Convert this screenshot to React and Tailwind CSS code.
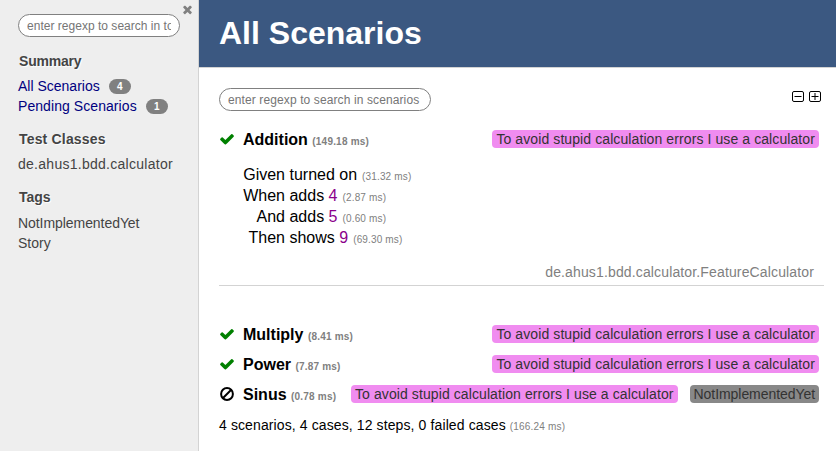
const STORY = 'To avoid stupid calculation errors I use a calculator';

function CheckIcon() {
  return (
    <svg viewBox="0 0 1792 1792" className="h-4 w-4 shrink-0" fill="#008000">
      <path d="M1671 566q0 40-28 68l-724 724-136 136q-28 28-68 28t-68-28l-136-136-362-362q-28-28-28-68t28-68l136-136q28-28 68-28t68 28l294 295 656-657q28-28 68-28t68 28l136 136q28 28 28 68z" />
    </svg>
  );
}

function BanIcon() {
  return (
    <svg viewBox="0 0 16 16" className="h-4 w-4 shrink-0" fill="none" stroke="#000" strokeWidth="2">
      <circle cx="8" cy="8" r="5.9" />
      <path d="M4 12L12 4" />
    </svg>
  );
}

function CloseIcon() {
  return (
    <svg viewBox="0 0 1792 1792" className="h-[13px] w-[13px]" fill="#808080">
      <path d="M1490 1322q0 40-28 68l-136 136q-28 28-68 28t-68-28l-294-294-294 294q-28 28-68 28t-68-28l-136-136q-28-28-28-68t28-68l294-294-294-294q-28-28-28-68t28-68l136-136q28-28 68-28t68 28l294 294 294-294q28-28 68-28t68 28l136 136q28 28 28 68t-28 68l-294 294 294 294q28 28 28 68z" />
    </svg>
  );
}

function BoxIcon({ plus }) {
  return (
    <svg viewBox="0 0 12 11" className="h-[11px] w-3" fill="none" stroke="#000" strokeWidth="1">
      <rect x="0.5" y="0.5" width="11" height="10" rx="1.5" />
      <path d="M2.5 5.5H9.5" />
      {plus && <path d="M6 2V9" />}
    </svg>
  );
}

function Search({ text, className, inputClass = 'tracking-[0.11px]' }) {
  return (
    <div className={`h-[23px] rounded-full border border-[#808080] bg-white px-2 ${className}`}>
      <input
        placeholder={text}
        className={`block h-[21px] w-full bg-transparent p-0 text-[12px] outline-none placeholder:text-[#757575] ${inputClass}`}
      />
    </div>
  );
}

function Count({ children }) {
  return (
    <span className="flex h-[15px] w-[22px] items-center justify-center rounded-full bg-[#808080] pt-px text-[10px] font-bold tracking-normal text-white">
      {children}
    </span>
  );
}

function Heading({ className = '', children }) {
  return (
    <h3 className={`h-5 pl-px text-[14px] leading-5 font-bold text-[#444] [text-shadow:1px_1px_1px_#fff] ${className}`}>
      {children}
    </h3>
  );
}

function Tag({ gray, children }) {
  return (
    <span
      className={`h-[18px] rounded pr-1 pl-1 text-[14px] leading-[18px] whitespace-nowrap text-[#333] ${
        gray ? 'bg-[#888888] tracking-[-0.06px]' : 'bg-[#f08cf0] tracking-[0.094px]'
      }`}
    >
      {children}
    </span>
  );
}

function Scenario({ icon, name, time, tags }) {
  return (
    <div className="flex h-[30px] items-center pr-[17px]">
      {icon}
      <h4 className="ml-2 pt-[3px] text-[16px] leading-5 font-bold whitespace-nowrap">
        {name} <span className="text-[10px] tracking-[0.2px] text-[#808080]">({time} ms)</span>
      </h4>
      <div className="ml-auto flex gap-3">{tags}</div>
    </div>
  );
}

function Step({ word, rest, value, time }) {
  return (
    <div className="flex h-[21px] items-baseline leading-[21px] whitespace-pre">
      <span className="w-[47px] text-right">{word}</span>
      <span> {rest}</span>
      {value && <span className="text-[#8b008b]"> {value}</span>}
      <span className="ml-[5px] text-[10px] tracking-[0.15px] text-[#808080]">({time} ms)</span>
    </div>
  );
}

export default function App() {
  return (
    <div className="flex h-[451px] w-[836px] overflow-hidden bg-white font-['Liberation_Sans',Arial,sans-serif] text-black">
      <aside className="relative h-full w-[199px] shrink-0 border-r border-[#d3d3d3] bg-[#eee] pt-[14px] pl-[18px] text-[14px] leading-5">
        <button className="absolute top-[3px] right-1" aria-label="Close">
          <CloseIcon />
        </button>
        <Search text="enter regexp to search in toc" className="w-[162px]" inputClass="tracking-[0.02px]" />
        <div className="pt-[14px]">
          <Heading className="tracking-[-0.2px]">Summary</Heading>
          <ul className="mt-[5px] text-[#000080]">
            <li className="flex h-5 items-center gap-[9px]">All Scenarios <Count>4</Count></li>
            <li className="flex h-5 items-center gap-[9px] tracking-[0.07px]">Pending Scenarios <Count>1</Count></li>
          </ul>
        </div>
        <div className="pt-[13px]">
          <Heading className="tracking-[0.18px]">Test Classes</Heading>
          <p className="mt-[5px] tracking-[0.27px] text-[#444]">de.ahus1.bdd.calculator</p>
        </div>
        <div className="pt-[13px]">
          <Heading>Tags</Heading>
          <ul className="mt-[6px] text-[#444]">
            <li className="tracking-[-0.06px]">NotImplementedYet</li>
            <li>Story</li>
          </ul>
        </div>
      </aside>
      <main className="flex-1">
        <header className="h-[68px] border-b border-[#d3d3d3] bg-[#3b5881] pl-5">
          <h1 className="pt-[13px] text-[32px] leading-10 font-bold text-white">All Scenarios</h1>
        </header>
        <div className="pl-5">
          <div className="flex items-start pt-5 pr-[15px]">
            <Search text="enter regexp to search in scenarios" className="w-[212px]" />
            <div className="mt-[3px] ml-auto flex gap-[5px]">
              <BoxIcon />
              <BoxIcon plus />
            </div>
          </div>
          <div className="mt-[13px]">
            <Scenario icon={<CheckIcon />} name="Addition" time="149.18" tags={<Tag>{STORY}</Tag>} />
          </div>
          <div className="mt-[10px] pl-[19px] text-[16px]">
            <Step word="Given" rest="turned on" time="31.32" />
            <Step word="When" rest="adds" value="4" time="2.87" />
            <Step word="And" rest="adds" value="5" time="0.60" />
            <Step word="Then" rest="shows" value="9" time="69.30" />
          </div>
          <div className="mt-[14px] mr-3 h-[24px] border-b border-[#d3d3d3] pr-[10px] text-right text-[14px] leading-5 tracking-[0.14px] text-[#808080]">
            de.ahus1.bdd.calculator.FeatureCalculator
          </div>
          <div className="mt-[33px]">
            <Scenario icon={<CheckIcon />} name="Multiply" time="8.41" tags={<Tag>{STORY}</Tag>} />
            <Scenario icon={<CheckIcon />} name="Power" time="7.87" tags={<Tag>{STORY}</Tag>} />
            <Scenario
              icon={<BanIcon />}
              name="Sinus"
              time="0.78"
              tags={<><Tag>{STORY}</Tag><Tag gray>NotImplementedYet</Tag></>}
            />
          </div>
          <p className="mt-[6px] text-[14px] leading-5 tracking-[0.11px]">
            4 scenarios, 4 cases, 12 steps, 0 failed cases{' '}
            <span className="text-[10px] tracking-[0.2px] text-[#808080]">(166.24 ms)</span>
          </p>
        </div>
      </main>
    </div>
  );
}
